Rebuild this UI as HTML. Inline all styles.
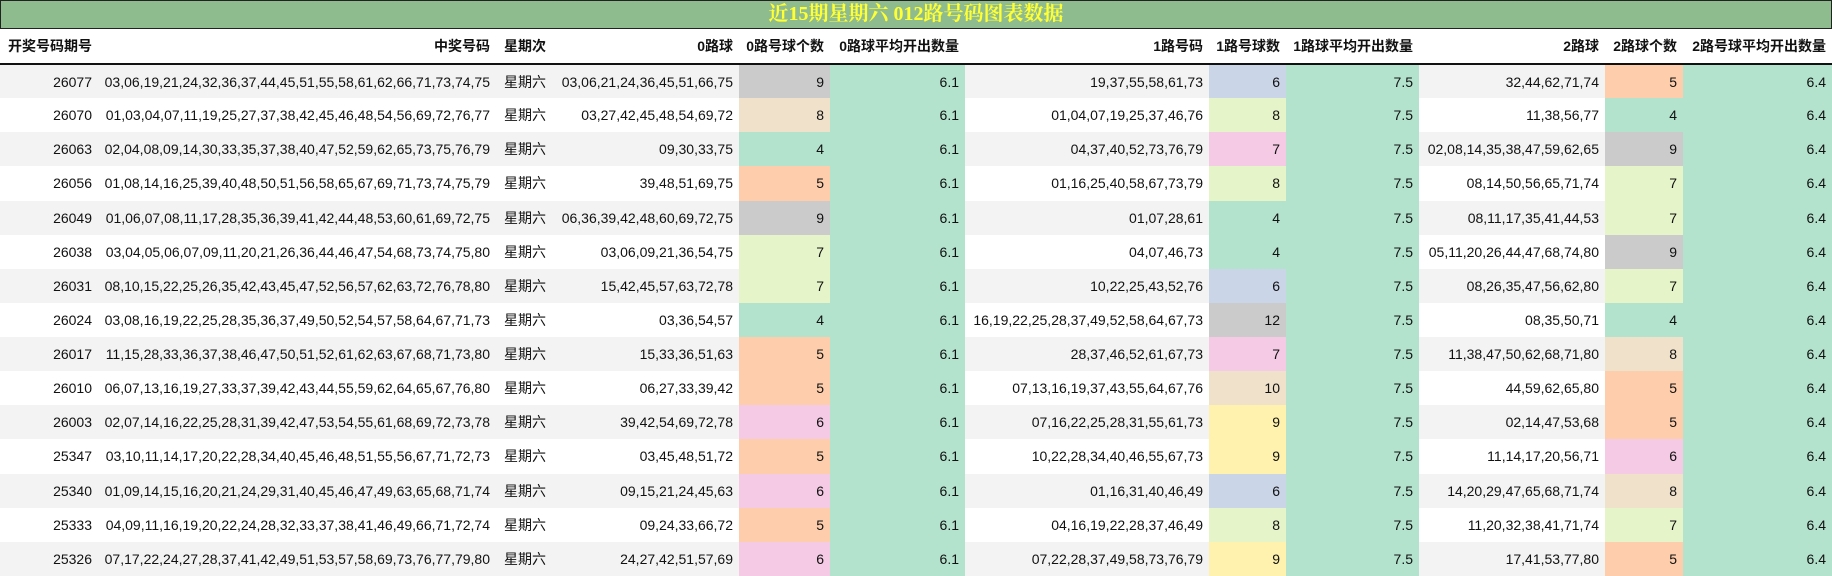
<!DOCTYPE html>
<html><head><meta charset="utf-8"><style>
*{margin:0;padding:0;box-sizing:border-box}
body{width:1832px;height:576px;background:#fff;font-family:"Liberation Sans","Noto Sans CJK SC",sans-serif;font-size:14px;color:#111;overflow:hidden}
.title{height:29px;background:#8fbc8f;border:1px solid #222;color:#ffff33;font:bold 20px "Liberation Serif","Noto Serif CJK SC",serif;text-align:center;line-height:27px}
table{border-collapse:collapse;table-layout:fixed;width:1832px}
th{height:35px;font-weight:bold;text-align:right;padding-right:6px;border-bottom:2px solid #111;white-space:nowrap}
td{height:34.13px;text-align:right;padding-right:6px;white-space:nowrap}
tr.o td{background:#f3f3f3}
td.c3{text-align:left;padding-left:8px}
td.a{background:#b3e2cd!important}
.g{background:#cbcbcb!important}.b{background:#f0e1cb!important}.n{background:#b3e2cd!important}.r{background:#fdcdac!important}.l{background:#e6f5c9!important}.p{background:#f4cae4!important}.u{background:#cbd5e8!important}.y{background:#fff2ae!important}
</style></head><body>
<div class="title">近15期星期六 012路号码图表数据</div>
<table>
<colgroup><col style="width:98px"><col style="width:398px"><col style="width:58px"><col style="width:185px"><col style="width:91px"><col style="width:135px"><col style="width:244px"><col style="width:77px"><col style="width:133px"><col style="width:186px"><col style="width:78px"><col style="width:149px"></colgroup>
<tr><th>开奖号码期号</th><th>中奖号码</th><th style="text-align:left;padding-left:8px">星期次</th><th>0路球</th><th>0路号球个数</th><th>0路球平均开出数量</th><th>1路号码</th><th>1路号球数</th><th>1路球平均开出数量</th><th>2路球</th><th>2路球个数</th><th>2路号球平均开出数量</th></tr>
<tr class="o"><td>26077</td><td>03,06,19,21,24,32,36,37,44,45,51,55,58,61,62,66,71,73,74,75</td><td class="c3">星期六</td><td>03,06,21,24,36,45,51,66,75</td><td class="g">9</td><td class="a">6.1</td><td>19,37,55,58,61,73</td><td class="u">6</td><td class="a">7.5</td><td>32,44,62,71,74</td><td class="r">5</td><td class="a">6.4</td></tr>
<tr><td>26070</td><td>01,03,04,07,11,19,25,27,37,38,42,45,46,48,54,56,69,72,76,77</td><td class="c3">星期六</td><td>03,27,42,45,48,54,69,72</td><td class="b">8</td><td class="a">6.1</td><td>01,04,07,19,25,37,46,76</td><td class="l">8</td><td class="a">7.5</td><td>11,38,56,77</td><td class="n">4</td><td class="a">6.4</td></tr>
<tr class="o"><td>26063</td><td>02,04,08,09,14,30,33,35,37,38,40,47,52,59,62,65,73,75,76,79</td><td class="c3">星期六</td><td>09,30,33,75</td><td class="n">4</td><td class="a">6.1</td><td>04,37,40,52,73,76,79</td><td class="p">7</td><td class="a">7.5</td><td>02,08,14,35,38,47,59,62,65</td><td class="g">9</td><td class="a">6.4</td></tr>
<tr><td>26056</td><td>01,08,14,16,25,39,40,48,50,51,56,58,65,67,69,71,73,74,75,79</td><td class="c3">星期六</td><td>39,48,51,69,75</td><td class="r">5</td><td class="a">6.1</td><td>01,16,25,40,58,67,73,79</td><td class="l">8</td><td class="a">7.5</td><td>08,14,50,56,65,71,74</td><td class="l">7</td><td class="a">6.4</td></tr>
<tr class="o"><td>26049</td><td>01,06,07,08,11,17,28,35,36,39,41,42,44,48,53,60,61,69,72,75</td><td class="c3">星期六</td><td>06,36,39,42,48,60,69,72,75</td><td class="g">9</td><td class="a">6.1</td><td>01,07,28,61</td><td class="n">4</td><td class="a">7.5</td><td>08,11,17,35,41,44,53</td><td class="l">7</td><td class="a">6.4</td></tr>
<tr><td>26038</td><td>03,04,05,06,07,09,11,20,21,26,36,44,46,47,54,68,73,74,75,80</td><td class="c3">星期六</td><td>03,06,09,21,36,54,75</td><td class="l">7</td><td class="a">6.1</td><td>04,07,46,73</td><td class="n">4</td><td class="a">7.5</td><td>05,11,20,26,44,47,68,74,80</td><td class="g">9</td><td class="a">6.4</td></tr>
<tr class="o"><td>26031</td><td>08,10,15,22,25,26,35,42,43,45,47,52,56,57,62,63,72,76,78,80</td><td class="c3">星期六</td><td>15,42,45,57,63,72,78</td><td class="l">7</td><td class="a">6.1</td><td>10,22,25,43,52,76</td><td class="u">6</td><td class="a">7.5</td><td>08,26,35,47,56,62,80</td><td class="l">7</td><td class="a">6.4</td></tr>
<tr><td>26024</td><td>03,08,16,19,22,25,28,35,36,37,49,50,52,54,57,58,64,67,71,73</td><td class="c3">星期六</td><td>03,36,54,57</td><td class="n">4</td><td class="a">6.1</td><td>16,19,22,25,28,37,49,52,58,64,67,73</td><td class="g">12</td><td class="a">7.5</td><td>08,35,50,71</td><td class="n">4</td><td class="a">6.4</td></tr>
<tr class="o"><td>26017</td><td>11,15,28,33,36,37,38,46,47,50,51,52,61,62,63,67,68,71,73,80</td><td class="c3">星期六</td><td>15,33,36,51,63</td><td class="r">5</td><td class="a">6.1</td><td>28,37,46,52,61,67,73</td><td class="p">7</td><td class="a">7.5</td><td>11,38,47,50,62,68,71,80</td><td class="b">8</td><td class="a">6.4</td></tr>
<tr><td>26010</td><td>06,07,13,16,19,27,33,37,39,42,43,44,55,59,62,64,65,67,76,80</td><td class="c3">星期六</td><td>06,27,33,39,42</td><td class="r">5</td><td class="a">6.1</td><td>07,13,16,19,37,43,55,64,67,76</td><td class="b">10</td><td class="a">7.5</td><td>44,59,62,65,80</td><td class="r">5</td><td class="a">6.4</td></tr>
<tr class="o"><td>26003</td><td>02,07,14,16,22,25,28,31,39,42,47,53,54,55,61,68,69,72,73,78</td><td class="c3">星期六</td><td>39,42,54,69,72,78</td><td class="p">6</td><td class="a">6.1</td><td>07,16,22,25,28,31,55,61,73</td><td class="y">9</td><td class="a">7.5</td><td>02,14,47,53,68</td><td class="r">5</td><td class="a">6.4</td></tr>
<tr><td>25347</td><td>03,10,11,14,17,20,22,28,34,40,45,46,48,51,55,56,67,71,72,73</td><td class="c3">星期六</td><td>03,45,48,51,72</td><td class="r">5</td><td class="a">6.1</td><td>10,22,28,34,40,46,55,67,73</td><td class="y">9</td><td class="a">7.5</td><td>11,14,17,20,56,71</td><td class="p">6</td><td class="a">6.4</td></tr>
<tr class="o"><td>25340</td><td>01,09,14,15,16,20,21,24,29,31,40,45,46,47,49,63,65,68,71,74</td><td class="c3">星期六</td><td>09,15,21,24,45,63</td><td class="p">6</td><td class="a">6.1</td><td>01,16,31,40,46,49</td><td class="u">6</td><td class="a">7.5</td><td>14,20,29,47,65,68,71,74</td><td class="b">8</td><td class="a">6.4</td></tr>
<tr><td>25333</td><td>04,09,11,16,19,20,22,24,28,32,33,37,38,41,46,49,66,71,72,74</td><td class="c3">星期六</td><td>09,24,33,66,72</td><td class="r">5</td><td class="a">6.1</td><td>04,16,19,22,28,37,46,49</td><td class="l">8</td><td class="a">7.5</td><td>11,20,32,38,41,71,74</td><td class="l">7</td><td class="a">6.4</td></tr>
<tr class="o"><td>25326</td><td>07,17,22,24,27,28,37,41,42,49,51,53,57,58,69,73,76,77,79,80</td><td class="c3">星期六</td><td>24,27,42,51,57,69</td><td class="p">6</td><td class="a">6.1</td><td>07,22,28,37,49,58,73,76,79</td><td class="y">9</td><td class="a">7.5</td><td>17,41,53,77,80</td><td class="r">5</td><td class="a">6.4</td></tr>
</table>
</body></html>
